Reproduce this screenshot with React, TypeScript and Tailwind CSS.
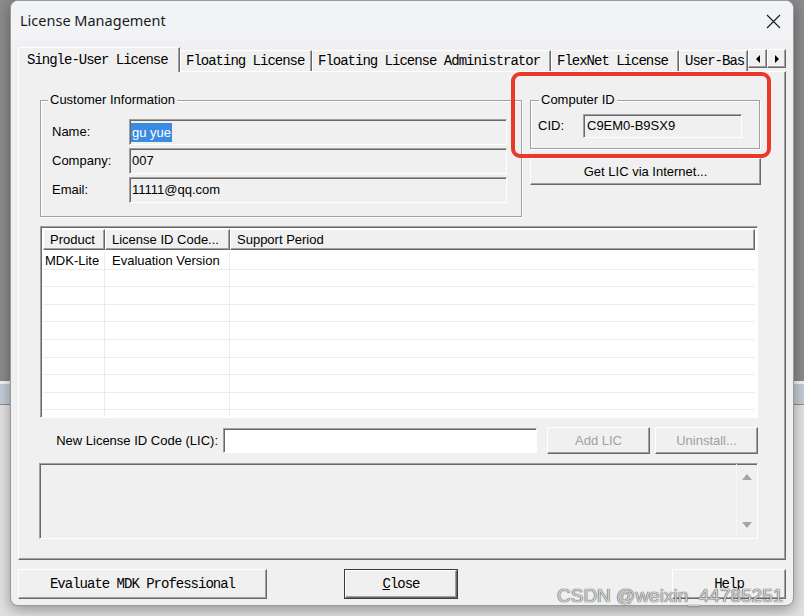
import React from "react";

const raised =
  "border border-t-white border-l-white border-r-[#696969] border-b-[#696969] shadow-[inset_-1px_-1px_0_#a0a0a0] bg-[#f0f0f0]";
const sunken =
  "border border-t-[#a0a0a0] border-l-[#a0a0a0] border-r-white border-b-white shadow-[inset_1px_1px_0_#696969]";
const etched =
  "border border-[#a0a0a0] shadow-[inset_1px_1px_0_#fff,1px_1px_0_#fff]";

const ui = "font-['Liberation_Sans',Arial,sans-serif] text-[13px] text-black";
const mono = "font-['Liberation_Mono','Courier_New',monospace] text-[14px] tracking-[-1px] text-black";

function Field({ label, value, selected }: { label: string; value: string; selected?: boolean }) {
  return (
    <div className="flex flex-row items-center h-[26px]">
      <div className="w-[77px]">{label}</div>
      <div className={`${sunken} flex-1 h-full flex items-center pl-[1px] bg-[#f0f0f0]`}>
        {selected ? (
          <span className="bg-[#3a8be3] text-white leading-[19px] px-[1px]">{value}</span>
        ) : (
          <span className="px-[1px]">{value}</span>
        )}
      </div>
    </div>
  );
}

function Tab({ label, width, active }: { label: string; width: number; active?: boolean }) {
  if (active) {
    return (
      <div
        className="h-[25px] flex items-center pl-[8px] border-t border-l border-r border-t-white border-l-white border-r-[#696969] shadow-[inset_-1px_0_0_#a0a0a0] rounded-tl-[2px] relative top-[1px] bg-[#f0f0f0] z-10 whitespace-nowrap"
        style={{ width }}
      >
        {label}
      </div>
    );
  }
  return (
    <div
      className="h-[21px] flex items-center pl-[5px] border-t border-l border-r border-t-white border-l-white border-r-[#696969] shadow-[inset_-1px_0_0_#a0a0a0] overflow-hidden whitespace-nowrap"
      style={{ width }}
    >
      {label}
    </div>
  );
}

const rows = Array.from({ length: 10 });

export default function App() {
  return (
    <div className="relative w-[804px] h-[616px] overflow-hidden flex flex-col">
      {/* desktop behind the dialog */}
      <div className="h-[381px] bg-[#8b8b8b]" />
      <div className="h-[3px] bg-[#f4f4f4]" />
      <div className="h-[20px] bg-[#c2cbd7]" />
      <div className="h-[1px] bg-[#8e8e8e]" />
      <div className="flex-1 bg-[#e2e2e2]" />

      {/* dialog window */}
      <div
        className={`absolute left-[10px] top-0 w-[784px] h-[606px] rounded-[8px] border border-[#9a9a9a] bg-[#f0f0f0] shadow-[0_4px_14px_rgba(0,0,0,0.35)] overflow-hidden flex flex-col ${ui}`}
      >
        <div className="h-[40px] bg-[#f1f3f7] flex flex-row items-center pl-[9px] pr-[12px]">
          <span className="font-['Noto_Sans','Open_Sans',sans-serif] text-[14.5px] text-[#1a1a1a]">
            License Management
          </span>
          <svg className="ml-auto" width="15" height="15" viewBox="0 0 15 15">
            <path d="M1 1L14 14M14 1L1 14" stroke="#1a1a1a" strokeWidth="1.1" />
          </svg>
        </div>

        <div className="flex flex-col px-[7px] mt-[5px]">
          {/* tabs */}
          <div className={`flex flex-row items-end h-[25px] ${mono}`}>
            <Tab label="Single-User License" width={162} active />
            <Tab label="Floating License" width={132} />
            <Tab label="Floating License Administrator" width={239} />
            <Tab label="FlexNet License" width={128} />
            <Tab label="User-Bas" width={69} />
            <div className="flex flex-row self-start mt-[3px]">
              {["M5 1L1 5L5 9Z", "M1 1L5 5L1 9Z"].map((d) => (
                <div key={d} className={`${raised} w-[19px] h-[19px] flex items-center justify-center`}>
                  <svg width="6" height="10" viewBox="0 0 6 10">
                    <path d={d} fill="#000" />
                  </svg>
                </div>
              ))}
            </div>
          </div>

          {/* tab page */}
          <div className="relative h-[489px] border border-t-white border-l-white border-r-[#696969] border-b-[#696969] shadow-[inset_-1px_-1px_0_#a0a0a0] flex flex-col">
            <div className="flex flex-row items-start mt-[20px] ml-[21px]">
              <fieldset className={`${etched} w-[482px] h-[125px] pl-[11px] pr-[14px] pt-[11px]`}>
                <legend className="-ml-[4px] px-[2px] bg-[#f0f0f0] leading-[16px]">Customer Information</legend>
                <div className="flex flex-col gap-[3px]">
                  <Field label="Name:" value="gu yue" selected />
                  <Field label="Company:" value="007" />
                  <Field label="Email:" value="11111@qq.com" />
                </div>
              </fieldset>

              <div className="flex flex-col ml-[8px] w-[231px]">
                <fieldset className={`${etched} w-[230px] h-[57px] pl-[7px] pr-[17px] pt-[6px]`}>
                  <legend className="ml-[1px] px-[2px] bg-[#f0f0f0] leading-[16px]">Computer ID</legend>
                  <div className="flex flex-row items-center h-[24px]">
                    <div className="w-[45px]">CID:</div>
                    <div className={`${sunken} flex-1 h-full flex items-center pl-[3px] bg-[#f0f0f0]`}>
                      C9EM0-B9SX9
                    </div>
                  </div>
                </fieldset>
                <div className={`${raised} mt-[9px] h-[27px] flex items-center justify-center`}>
                  Get LIC via Internet...
                </div>
              </div>
            </div>

            {/* license list */}
            <div className={`${sunken} mt-[9px] ml-[21px] w-[718px] h-[192px] bg-white overflow-hidden flex flex-col p-[2px] pb-0`}>
              <div className="flex flex-row h-[21px] bg-[#f0f0f0] shrink-0">
                {[
                  ["Product", "w-[62px]"],
                  ["License ID Code...", "w-[125px]"],
                  ["Support Period", "flex-1"],
                ].map(([t, w]) => (
                  <div key={t} className={`${raised} ${w} h-full flex items-center pl-[6px] whitespace-nowrap`}>
                    {t}
                  </div>
                ))}
              </div>
              <div className="flex flex-col mt-[2px]">
                {rows.map((_, i) => (
                  <div key={i} className="flex flex-row h-[17.6px] border-b border-[#ececec] shrink-0">
                    <div className="w-[62px] border-r border-[#ececec] pl-[2px] leading-[17px]">
                      {i === 0 ? "MDK-Lite" : ""}
                    </div>
                    <div className="w-[125px] border-r border-[#ececec] pl-[7px] leading-[17px]">
                      {i === 0 ? "Evaluation Version" : ""}
                    </div>
                    <div className="flex-1" />
                  </div>
                ))}
              </div>
            </div>

            {/* new LIC row */}
            <div className="flex flex-row items-center mt-[9px] ml-[21px] h-[27px]">
              <div className="w-[178px] text-right whitespace-nowrap">New License ID Code (LIC):</div>
              <div className={`${sunken} ml-[5px] w-[314px] h-[25px] bg-white shrink-0`} />
              <div className={`${raised} ml-[10px] w-[103px] h-[27px] shrink-0 flex items-center justify-center text-[#a0a0a0]`}>
                Add LIC
              </div>
              <div className={`${raised} ml-[5px] w-[103px] h-[27px] shrink-0 flex items-center justify-center text-[#a0a0a0]`}>
                Uninstall...
              </div>
            </div>

            {/* status text */}
            <div className={`${sunken} mt-[9px] ml-[20px] w-[719px] h-[76px] flex flex-row`}>
              <div className="flex-1" />
              <div className="w-[21px] border-l border-[#f7f7f7] flex flex-col items-center justify-between py-[10px]">
                <svg width="10" height="6" viewBox="0 0 10 6">
                  <path d="M5 0L10 6H0Z" fill="#a6a6a6" />
                </svg>
                <svg width="10" height="6" viewBox="0 0 10 6">
                  <path d="M0 0H10L5 6Z" fill="#a6a6a6" />
                </svg>
              </div>
            </div>

            {/* annotation */}
            <div className="absolute left-[492px] top-[0px] w-[260px] h-[86px] border-[4px] border-[#e8392c] rounded-[9px]" />
          </div>

          {/* dialog buttons */}
          <div className={`flex flex-row mt-[9px] h-[30px] ${mono}`}>
            <div className={`${raised} w-[249px] h-full flex items-center justify-center`}>
              Evaluate MDK Professional
            </div>
            <div className="ml-[77px] w-[114px] h-full border border-[#3c3c3c]">
              <div className={`${raised} w-full h-full flex items-center justify-center`}>
                <span>
                  <span className="underline">C</span>lose
                </span>
              </div>
            </div>
            <div className={`${raised} ml-auto w-[114px] h-full flex items-center justify-center`}>
              Help
            </div>
          </div>
        </div>
      </div>

      <div className="absolute left-[557px] top-[584px] font-['Liberation_Sans',Arial,sans-serif] text-[19px] leading-[24px] text-[#cfcfcf] [text-shadow:0_0_1px_#444,0_0_1px_#666]">
        CSDN @weixin_44785251
      </div>
    </div>
  );
}
